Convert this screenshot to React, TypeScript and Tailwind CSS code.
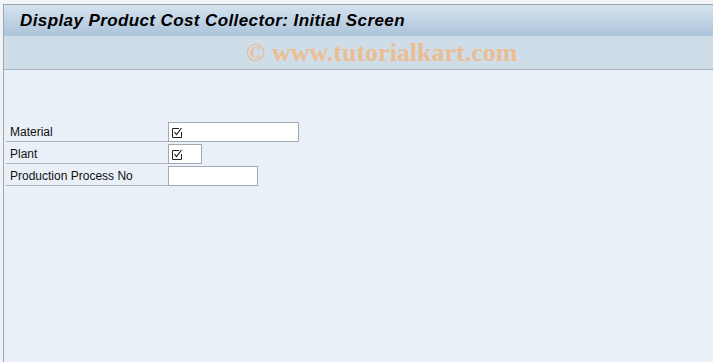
import React from "react";

const fields = [
  { label: "Material", width: "w-[131px]", checked: true },
  { label: "Plant", width: "w-[34px]", checked: true },
  { label: "Production Process No", width: "w-[90px]", checked: false },
];

function CheckIcon() {
  return (
    <svg width="11" height="11" viewBox="0 0 11 11" fill="none" className="ml-[3px]">
      <path d="M0.5 1.5 V10.5 H9.5 V5" stroke="#222" strokeWidth="1" />
      <path d="M0.5 1.5 H7" stroke="#222" strokeWidth="1" />
      <path d="M2.5 5 L4.5 7.5 L9.5 1" stroke="#222" strokeWidth="1.2" />
    </svg>
  );
}

export default function App() {
  return (
    <div className="w-full h-[362px] bg-[#f1f3f7] flex flex-col pt-[4px] pl-[3px] overflow-hidden font-['Liberation_Sans',Arial,sans-serif]">
      <div className="flex-1 flex flex-col border-l border-t border-[#9aa5b2] bg-[#e9f0f8]">
        <div className="h-[31px] flex items-center pl-[16px] bg-gradient-to-b from-[#d6e3ef] to-[#abc3da]">
          <span className="text-[17px] font-bold italic text-black tracking-[0.4px]">
            Display Product Cost Collector: Initial Screen
          </span>
        </div>
        <div className="h-[34px] flex items-center pl-[242px] bg-[#cfdde8] border-b border-[#a6b2bf]">
          <span className="text-[26px] font-bold font-['Liberation_Serif','Times_New_Roman',serif] text-[#ebbd92]">
            © www.tutorialkart.com
          </span>
        </div>
        <div className="flex-1 flex flex-col gap-[2px] pt-[52px] pl-[2px]">
          {fields.map((f) => (
            <div key={f.label} className="flex items-end h-[20px]">
              <div className="w-[162px] h-[20px] flex items-center pl-[4px] border-b border-[#a9b2bd] text-[12px] text-[#111]">
                {f.label}
              </div>
              <div className={`${f.width} h-[20px] bg-white border border-[#a2a9b3] flex items-center`}>
                {f.checked && <CheckIcon />}
              </div>
            </div>
          ))}
        </div>
      </div>
    </div>
  );
}
